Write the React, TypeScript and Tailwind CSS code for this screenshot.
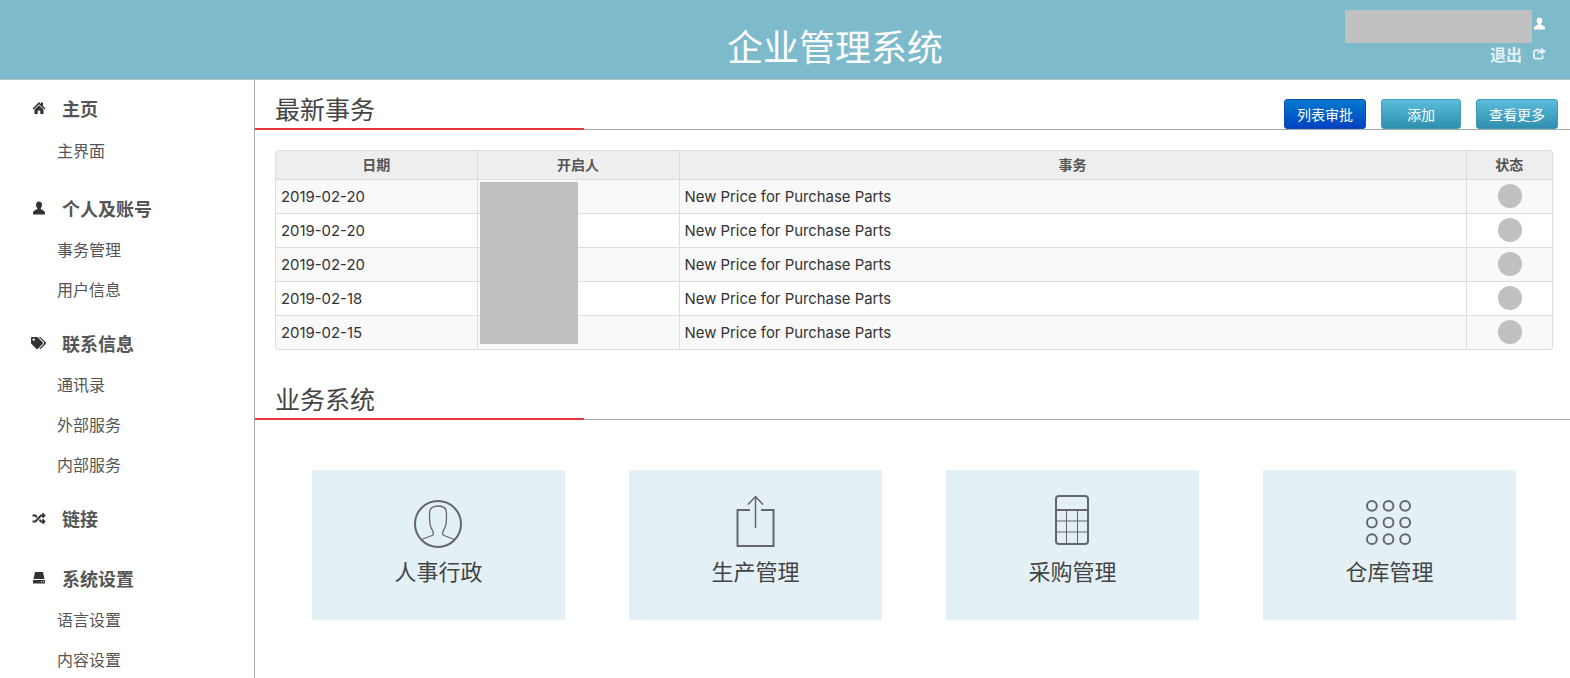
import { FaTags, FaRandom } from "react-icons/fa";

const cjk = "font-['Noto_Sans_CJK_SC','Microsoft_YaHei',sans-serif]";

function HomeIcon({ className }: { className?: string }) {
  return (
    <svg viewBox="0 0 14 14" className={className} fill="currentColor">
      <path d="M7 1 0.500 7.500 1.500 8.500 7 3.200 12.500 8.500 13.500 7.500 11 5V1.500H9V3z" />
      <path d="M2.500 8.500 7 4.300l4.500 4.200V13H8.300V9.500H5.700V13H2.500z" />
    </svg>
  );
}

function UserIcon({ className }: { className?: string }) {
  return (
    <svg viewBox="0 0 14 14" className={className} fill="currentColor">
      <path d="M7 0.500c-2 0-3 1.400-3 3.200 0 1.300.5 2.600 1.300 3.400.2.300.2.900-.2 1.200C3.900 9 1 9.600 1 12v1.500h12V12c0-2.400-2.900-3-4.100-3.700-.4-.3-.4-.9-.2-1.200C9.500 6.300 10 5 10 3.700c0-1.800-1-3.200-3-3.200z" />
    </svg>
  );
}

function DriveIcon({ className }: { className?: string }) {
  return (
    <svg viewBox="0 0 14 14" className={className} fill="currentColor">
      <path d="M3 1h8l1.500 7h-11z" />
      <path d="M1 9h12v3.500H1z" />
      <rect x="9" y="10.200" width="1" height="1" fill="#fff" />
      <rect x="11" y="10.200" width="1" height="1" fill="#fff" />
    </svg>
  );
}

function ShareIcon({ className }: { className?: string }) {
  return (
    <svg viewBox="0 0 14 14" className={className} fill="none" stroke="currentColor">
      <path d="M10.500 9v1.500a2 2 0 0 1-2 2H3a2 2 0 0 1-2-2V5.500a2 2 0 0 1 2-2h3.500" strokeWidth="2" />
      <path d="M8.500 0.500 14 4.500l-5.500 4V6.200C6.500 6.200 5.500 7 4.500 8.800 4.700 5.500 6.300 3.300 8.500 2.900z" fill="currentColor" stroke="none" />
    </svg>
  );
}

function PersonCircle() {
  return (
    <svg viewBox="0 0 48 48" className="-ml-[2px] mt-[5px] h-[48px] w-[48px]" fill="none" stroke="#666">
      <ellipse cx="24" cy="24" rx="23" ry="23" strokeWidth="2" />
      <path
        d="M7.500 39.500 18 35.500C19.500 35 19.500 33 19 31.500 18 29 16 27 16 24 15.500 21 15.500 17 15.500 13 15.500 8 19.500 6 24 6 28.500 6 32.500 8 32.500 13 32.500 17 32.500 21 32 24 32 27 30 29 29 31.500 28.500 33 28.500 35 30 35.500L40.500 39.500"
        strokeWidth="1.300"
      />
    </svg>
  );
}

function ShareOut() {
  return (
    <svg viewBox="0 0 40 52" className="h-[52px] w-[40px]" fill="none" stroke="#666">
      <path d="M14 15H1.500v36h36V15H25" strokeWidth="2" />
      <path d="M19.500 33V1.500" strokeWidth="1.500" />
      <path d="M12 9.500l7.500-8 7.500 8" strokeWidth="1.500" />
    </svg>
  );
}

function CalcIcon() {
  return (
    <svg viewBox="0 0 34 50" className="-ml-[2px] h-[50px] w-[34px]" fill="none" stroke="#666">
      <rect x="1" y="1" width="32" height="48" rx="3" strokeWidth="2" />
      <path d="M1 15h32" strokeWidth="2" />
      <path d="M1 26h32M1 37h32M11.500 15v34M22.500 15v34" strokeWidth="1" />
    </svg>
  );
}

function DotsIcon() {
  const pts = [0, 1, 2];
  return (
    <svg viewBox="0 0 46 46" className="-ml-[2px] mt-[5px] h-[45px] w-[45px]" fill="none" stroke="#666" strokeWidth="2">
      {pts.map((r) =>
        pts.map((c) => <circle key={`${r}-${c}`} cx={6 + c * 17} cy={6 + r * 17} r="5" />)
      )}
    </svg>
  );
}

const nav = [
  { title: "主页", icon: <HomeIcon className="h-[14px] w-[14px]" />, mt: "mt-[8px]", ul: "mt-[2px]", items: ["主界面"] },
  { title: "个人及账号", icon: <UserIcon className="h-[14px] w-[14px]" />, mt: "mt-[18px]", ul: "mt-[1px]", items: ["事务管理", "用户信息"] },
  { title: "联系信息", icon: <FaTags className="h-[14px] w-[15px]" />, mt: "mt-[14px]", ul: "mt-[1px]", items: ["通讯录", "外部服务", "内部服务"] },
  { title: "链接", icon: <FaRandom className="h-[13px] w-[14px]" />, mt: "mt-[14px]", ul: "", items: [] },
  { title: "系统设置", icon: <DriveIcon className="h-[14px] w-[14px]" />, mt: "mt-[20px]", ul: "mt-[1px]", items: ["语言设置", "内容设置"] },
];

const rows = ["2019-02-20", "2019-02-20", "2019-02-20", "2019-02-18", "2019-02-15"];

const modules = [
  { label: "人事行政", icon: <PersonCircle /> },
  { label: "生产管理", icon: <ShareOut /> },
  { label: "采购管理", icon: <CalcIcon /> },
  { label: "仓库管理", icon: <DotsIcon /> },
];

function SectionTitle({ title, children }: { title: string; children?: React.ReactNode }) {
  return (
    <div className="relative flex h-[50px] items-end justify-between border-b border-[#aaaaaa]">
      <div className="-mb-px h-full w-[329px] border-b-2 border-[#e8383d] pl-5 pt-[9px]">
        <h2 className="text-[25px] leading-[36px] text-[#444]">{title}</h2>
      </div>
      {children}
    </div>
  );
}

export default function App() {
  return (
    <div className={`flex h-screen flex-col overflow-hidden bg-white ${cjk}`}>
      {/* Header */}
      <header className="relative flex h-[80px] shrink-0 items-center justify-center border-b border-[#b5c4c9] bg-[#7cbacc] pl-[100px] pt-[10px]">
        <h1 className="text-[36px] leading-none text-white">企业管理系统</h1>
        <div className="absolute right-[24px] top-[10px] flex flex-col items-end text-white">
          <div className="flex items-center gap-[1px]">
            <div className="h-[33px] w-[187px] bg-[#c0c0c0]" />
            <UserIcon className="-mt-[6px] h-[13px] w-[13px]" />
          </div>
          <div className="-mt-[1px] flex items-center gap-[11px] text-[#e6f1f4]">
            <span className="text-[16px] font-bold leading-[24px]">退出</span>
            <ShareIcon className="-mt-[2px] h-[13px] w-[13px]" />
          </div>
        </div>
      </header>

      <div className="flex min-h-0 flex-1">
        {/* Sidebar */}
        <aside className="w-[255px] shrink-0 border-r border-[#aaaaaa] bg-white">
          {nav.map((g) => (
            <div key={g.title} className={g.mt}>
              <div className="flex h-[40px] items-center text-[18px] font-bold text-[#555]">
                <span className="flex w-[62px] justify-center pl-[24px] pr-[9px] text-[#333]">{g.icon}</span>
                {g.title}
              </div>
              {g.items.length > 0 && (
                <ul className={g.ul}>
                  {g.items.map((item) => (
                    <li key={item} className="flex h-[40px] items-center pl-[57px] text-[16px] text-[#555]">
                      {item}
                    </li>
                  ))}
                </ul>
              )}
            </div>
          ))}
        </aside>

        {/* Main */}
        <main className="min-w-0 flex-1">
          <SectionTitle title="最新事务">
            <div className="flex gap-[15px] pr-[12px] text-[14px] text-white">
              <button className="h-[30px] w-[82px] rounded-[3px] border border-[#0a4fb5] bg-gradient-to-b from-[#0b79d0] to-[#0042c0]">列表审批</button>
              <button className="h-[30px] w-[80px] rounded-[3px] border border-[#3f9cb8] bg-gradient-to-b from-[#5bbcdc] to-[#2f8fae]">添加</button>
              <button className="h-[30px] w-[82px] rounded-[3px] border border-[#3f9cb8] bg-gradient-to-b from-[#5bbcdc] to-[#2f8fae]">查看更多</button>
            </div>
          </SectionTitle>

          <div className="relative ml-[20px] mt-[20px] w-[1278px] overflow-hidden rounded-[3px] border border-[#dddddd]">
            <table className="w-full table-fixed border-collapse">
              <thead>
                <tr className="h-[28px] bg-[#eeeeee] text-[14px] font-bold text-[#555]">
                  <th className="w-[201px] border-r border-[#dddddd]">日期</th>
                  <th className="w-[202px] border-r border-[#dddddd]">开启人</th>
                  <th className="border-r border-[#dddddd]">事务</th>
                  <th className="w-[86px]">状态</th>
                </tr>
              </thead>
              <tbody className="font-['Inter',sans-serif] text-[14.9px] text-[#333]">
                {rows.map((d, i) => (
                  <tr key={i} className={`h-[34px] border-t border-[#dddddd] ${i % 2 === 0 ? "bg-[#f9f9f9]" : "bg-white"}`}>
                    <td className="border-r border-[#dddddd] pl-[5px] pt-[2px]">{d}</td>
                    <td className="border-r border-[#dddddd]" />
                    <td className="border-r border-[#dddddd] pl-[5px] pt-[2px]">New Price for Purchase Parts</td>
                    <td className="pl-[2px]">
                      <div className="mx-auto h-[24px] w-[24px] rounded-full bg-[#c0c0c0]" />
                    </td>
                  </tr>
                ))}
              </tbody>
            </table>
            {/* masked names */}
            <div className="absolute left-[204px] top-[31px] h-[162px] w-[98px] bg-[#c0c0c0]" />
          </div>

          <div className="mt-[20px]">
            <SectionTitle title="业务系统" />
          </div>

          <div className="mt-[50px] grid grid-cols-[repeat(4,253px)] gap-x-[64px] pl-[57px]">
            {modules.map((m) => (
              <div key={m.label} className="flex h-[150px] flex-col items-center bg-[#e3f1f7] pt-[25px]">
                <div className="flex h-[52px] items-start justify-center">{m.icon}</div>
                <div className="mt-[7px] text-[22px] leading-[32px] text-[#444]">{m.label}</div>
              </div>
            ))}
          </div>
        </main>
      </div>
    </div>
  );
}
